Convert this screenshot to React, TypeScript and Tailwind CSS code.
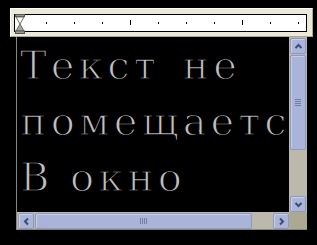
import type { ReactNode } from "react";

type Dir = "up" | "down" | "left" | "right";

const arrowPoints: Record<Dir, string> = {
  up: "1.5,6 4.5,3 7.5,6",
  down: "1.5,3 4.5,6 7.5,3",
  left: "6,1.5 3,4.5 6,7.5",
  right: "3,1.5 6,4.5 3,7.5",
};

function ScrollButton({ dir }: { dir: Dir }) {
  return (
    <div className="flex h-[16px] w-[16px] items-center justify-center rounded-[2px] border border-[#8d99bf] bg-[#aab5d9] shadow-[inset_1px_1px_0_#c9d1ec]">
      <svg width="9" height="9" viewBox="0 0 9 9">
        <polyline points={arrowPoints[dir]} fill="none" stroke="#3d4d72" strokeWidth="2" />
      </svg>
    </div>
  );
}

function Thumb({ vertical, children }: { vertical?: boolean; children?: ReactNode }) {
  return (
    <div
      className={
        "flex items-center justify-center rounded-[2px] border border-[#8d99bf] bg-[#a9b4d8] shadow-[inset_1px_1px_0_#c4cdea] " +
        (vertical ? "h-[95px] w-[16px] flex-col" : "h-[16px] w-[217px]")
      }
    >
      {children}
    </div>
  );
}

function Hourglass() {
  return (
    <svg width="10" height="20" viewBox="0 0 10 20" className="absolute left-[4px] top-[5px]">
      <rect x="0.5" y="0.5" width="9" height="2" fill="#9c9a90" stroke="#55534c" />
      <polygon points="1,3 9,3 5,10" fill="#ffffff" stroke="#6e6c64" />
      <polygon points="5,10 9,17 1,17" fill="#a8a69c" stroke="#6e6c64" />
      <rect x="0.5" y="17" width="9" height="2.5" fill="#9c9a90" stroke="#55534c" />
    </svg>
  );
}

const ticks = [46, 74, 102, 130, 158, 186, 214, 242, 270, 298];

export default function App() {
  return (
    <div className="relative h-[245px] w-[317px] overflow-hidden bg-black">
      {/* ruler / trackbar */}
      <div className="relative ml-[10px] mt-[8px] h-[29px] w-[303px] border border-b-[#aca899] border-l-white border-r-[#aca899] border-t-white bg-[#ece9d8]">
        <div className="ml-[3px] mt-[5px] h-[18px] w-[293px] border border-black bg-white" />
        {ticks.map((x, i) => (
          <div
            key={x}
            className={"absolute w-px bg-black " + (i === 3 || i === 7 ? "top-[11px] h-[5px]" : "top-[13px] h-[2px]")}
            style={{ left: x - 11 }}
          />
        ))}
        <Hourglass />
      </div>

      {/* edit control */}
      <div className="ml-[16px] grid h-[193px] w-[291px] grid-cols-[1fr_18px] grid-rows-[1fr_17px] border-b border-l border-[#8a877a]">
        <div className="overflow-hidden pl-[3px] font-['DejaVu_Serif',serif] text-[40px] leading-[56px] tracking-[4px] whitespace-pre text-[#c0c0c0] [-webkit-text-stroke:1.4px_black]">
          <div className="[word-spacing:6px]">Текст не</div>
          <div>помещаетс</div>
          <div>В окно</div>
        </div>

        <div className="flex flex-col items-start bg-[#bcb9ac] pt-[1px] pl-[1px]">
          <ScrollButton dir="up" />
          <div className="mt-[1px]">
            <Thumb vertical>
              <div className="flex flex-col gap-[1px]">
                <div className="h-px w-[6px] bg-[#6f7ca6]" />
                <div className="h-px w-[6px] bg-[#6f7ca6]" />
                <div className="h-px w-[6px] bg-[#6f7ca6]" />
                <div className="h-px w-[6px] bg-[#6f7ca6]" />
              </div>
            </Thumb>
          </div>
          <div className="flex-1" />
          <ScrollButton dir="down" />
        </div>

        <div className="flex items-start bg-[#bcb9ac] pl-[1px] pt-[1px]">
          <ScrollButton dir="left" />
          <div className="ml-[1px]">
            <Thumb>
              <div className="flex gap-[1px]">
                <div className="h-[6px] w-px bg-[#6f7ca6]" />
                <div className="h-[6px] w-px bg-[#6f7ca6]" />
                <div className="h-[6px] w-px bg-[#6f7ca6]" />
                <div className="h-[6px] w-px bg-[#6f7ca6]" />
              </div>
            </Thumb>
          </div>
          <div className="flex-1" />
          <ScrollButton dir="right" />
        </div>

        <div className="bg-[#aca893]" />
      </div>
    </div>
  );
}
